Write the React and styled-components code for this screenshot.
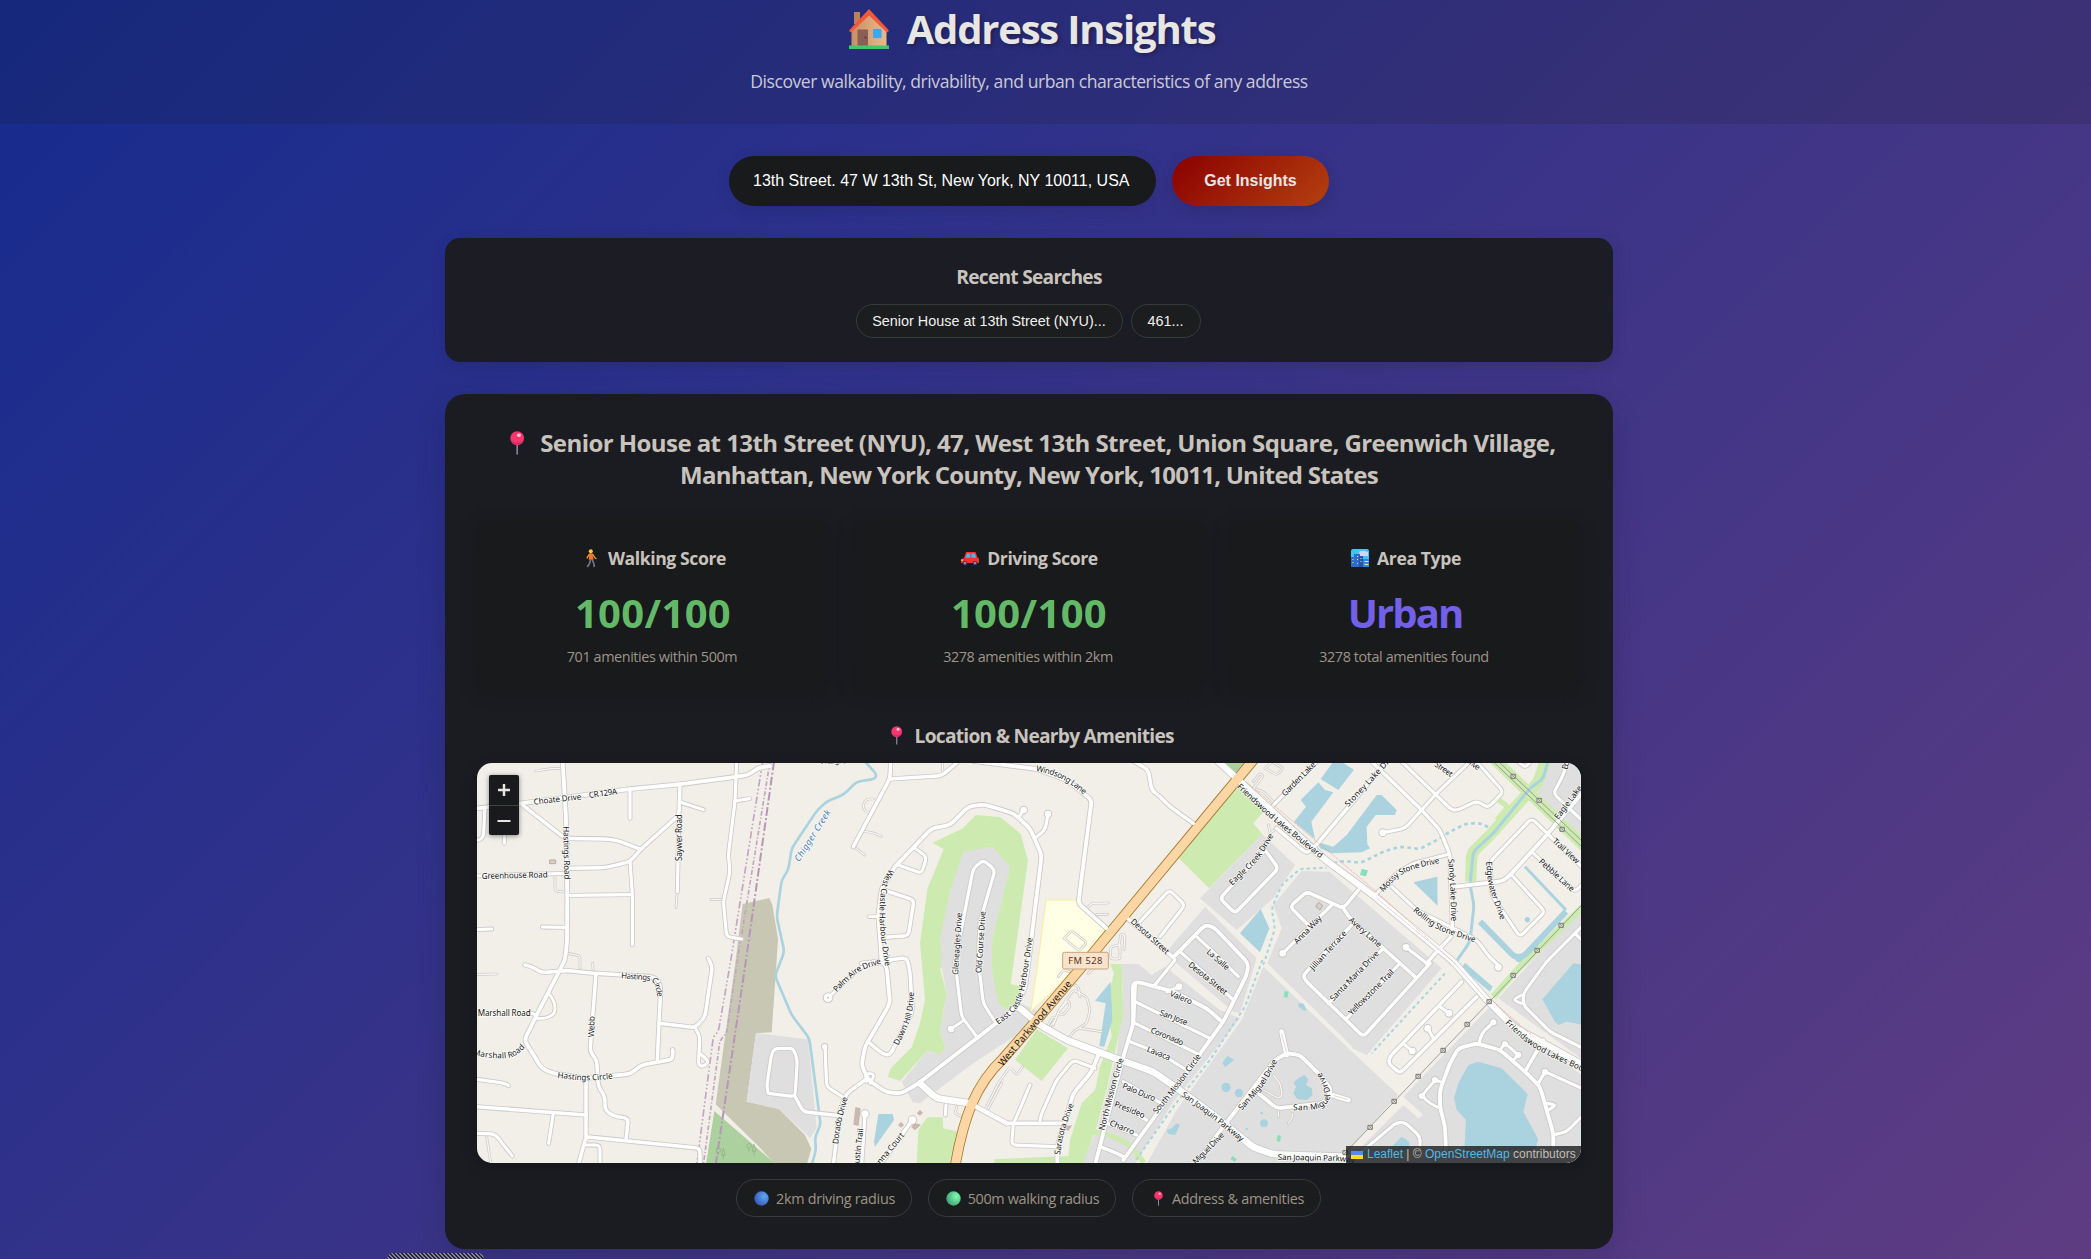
import React from "react";
import styled, { createGlobalStyle } from "styled-components";

const Global = createGlobalStyle`
  *, *::before, *::after { box-sizing: border-box; }
  html, body { margin: 0; padding: 0; }
  body {
    height: 1259px;
    overflow: hidden;
    font-family: "Open Sans", "Noto Sans", sans-serif;
    color: #c8c3bc;
    background: #2a2a7e;
  }
  h1, h2, h3, p { margin: 0; }
  svg { display: block; }
`;

const Page = styled.div`
  position: relative;
  height: 1259px;
  overflow: hidden;
  background: linear-gradient(135deg, #152b8e 0%, #5e3c82 100%);
`;

const Header = styled.header`
  height: 124px;
  padding-right: 33px;
  display: flex;
  flex-direction: column;
  align-items: center;
  background: rgba(24, 26, 27, 0.15);
`;

const Title = styled.h1`
  display: flex;
  align-items: center;
  gap: 17px;
  height: 60px;
  margin-top: -1px;
  padding-left: 5px;
  font-size: 40px;
  font-weight: 700;
  letter-spacing: -1.2px;
  line-height: 60px;
  color: #e8e6e3;
  text-shadow: 2px 2px 4px rgba(0, 0, 0, 0.3);
  white-space: nowrap;
`;

const Subtitle = styled.p`
  margin-top: 8px;
  font-size: 17.6px;
  line-height: 28px;
  letter-spacing: -0.46px;
  color: rgba(232, 230, 227, 0.85);
  white-space: nowrap;
`;

const Main = styled.main`
  width: 1168px;
  margin: 0 0 0 445px;
  padding-top: 32px;
  display: flex;
  flex-direction: column;
`;

const SearchForm = styled.div`
  display: flex;
  gap: 16px;
  width: 600px;
  height: 50px;
  margin: 0 auto 32px;
`;

const Input = styled.div`
  flex: 1;
  padding: 0 24px;
  border-radius: 25px;
  background: #181a1b;
  color: #fff;
  font: 16px/49px "Liberation Sans", sans-serif;
  white-space: nowrap;
  box-shadow: 0 4px 15px rgba(0, 0, 0, 0.1);
`;

const Submit = styled.button`
  width: 157px;
  padding: 0;
  border: 0;
  border-radius: 25px;
  background: linear-gradient(135deg, #8b0000, #b4400f);
  color: #e8e6e3;
  font: bold 16px "Liberation Sans", sans-serif;
  box-shadow: 0 4px 15px rgba(0, 0, 0, 0.15);
`;

const Recent = styled.section`
  height: 124px;
  margin-bottom: 32px;
  padding-top: 24px;
  border-radius: 15px;
  background: rgba(27, 28, 33, 0.97);
  box-shadow: 0 4px 15px rgba(0, 0, 0, 0.1);
`;

const SectionTitle = styled.h3`
  display: flex;
  align-items: center;
  justify-content: center;
  gap: ${(p) => p.$gap || 8}px;
  height: 28px;
  padding-top: ${(p) => (p.$large ? 1 : 0)}px;
  font-size: ${(p) => (p.$large ? 19.2 : 17.6)}px;
  font-weight: 700;
  line-height: 28px;
  letter-spacing: ${(p) => (p.$large ? -0.75 : -0.4)}px;
  color: #c8c3bc;
  white-space: nowrap;
`;

const Chips = styled.div`
  display: flex;
  justify-content: center;
  gap: ${(p) => p.$gap}px;
  margin-top: ${(p) => p.$top}px;
  padding-right: 2px;
`;

const Chip = styled.button`
  width: ${(p) => p.$w}px;
  height: 34px;
  padding: 0;
  border: 1px solid #363b3e;
  border-radius: 20px;
  background: #1b1d1e;
  color: #f2f0ee;
  font: 14.4px "Liberation Sans", sans-serif;
  white-space: nowrap;
`;

const Panel = styled.section`
  height: 855px;
  padding: 32px;
  border-radius: 20px;
  background: #1b1c21;
  box-shadow: 0 10px 30px rgba(0, 0, 0, 0.15);
`;

const Address = styled.h2`
  height: 70px;
  padding-top: 1px;
  font-size: 24px;
  font-weight: 700;
  line-height: 32px;
  letter-spacing: -0.56px;
  text-align: center;
  white-space: nowrap;
  color: #c8c3bc;
  svg { display: inline-block; vertical-align: -3px; margin: 0 15.4px 0 8px; }
`;

const AddressTail = styled.span`
  letter-spacing: -0.75px;
`;

const Cards = styled.div`
  display: grid;
  grid-template-columns: repeat(3, 1fr);
  gap: 24px;
  margin-top: 24px;
`;

const Card = styled.article`
  height: 170px;
  padding-top: 24px;
  border-radius: 15px;
  background: #191a1b;
  text-align: center;
  box-shadow: 0 4px 15px rgba(24, 26, 27, 0.9);
`;

const Score = styled.div`
  margin-top: 14px;
  font-size: 40px;
  font-weight: 700;
  line-height: 54px;
  letter-spacing: ${(p) => p.$track}px;
  color: ${(p) => p.$color};
`;

const Detail = styled.p`
  margin-top: 6px;
  padding-right: 2px;
  font-size: 14.4px;
  line-height: 22px;
  letter-spacing: -0.41px;
  color: #9d9488;
`;

const MapHeading = styled.div`
  margin-top: 31px;
  padding-left: 7px;
`;

const MapFrame = styled.div`
  position: relative;
  height: 400px;
  margin-top: 14px;
  overflow: hidden;
  border-radius: 15px;
  background: #f2efe9;
  box-shadow: 0 4px 15px rgba(0, 0, 0, 0.2);
`;

const ZoomControl = styled.div`
  position: absolute;
  top: 12px;
  left: 12px;
  width: 30px;
  height: 60px;
  border-radius: 2px;
  overflow: hidden;
  background: #181a1b;
  box-shadow: 0 1px 5px rgba(0, 0, 0, 0.45);
`;

const ZoomButton = styled.div`
  display: flex;
  align-items: center;
  justify-content: center;
  height: 30px;
  & + & { border-top: 1px solid #3e4446; }
`;

const Attribution = styled.div`
  position: absolute;
  right: 0;
  bottom: 0;
  display: flex;
  align-items: center;
  gap: 4px;
  width: 235px;
  height: 17px;
  padding-left: 5px;
  background: rgba(24, 26, 27, 0.8);
  color: #c3beb6;
  font: 12px/17px "Liberation Sans", sans-serif;
  white-space: nowrap;
  span { color: #50b9e8; }
`;

const Pill = styled.div`
  display: flex;
  align-items: center;
  justify-content: center;
  gap: 7px;
  width: ${(p) => p.$w}px;
  height: 38px;
  padding-left: ${(p) => p.$shift || 2}px;
  border: 1px solid #363b3e;
  border-radius: 20px;
  background: #1b1c1d;
  color: #9d9488;
  font-size: 14.4px;
  letter-spacing: ${(p) => p.$track || -0.3}px;
  white-space: nowrap;
`;

const Hatch = styled.div`
  position: absolute;
  left: 387px;
  top: 1253px;
  width: 97px;
  height: 6px;
  border-radius: 8px 8px 0 0;
  background: repeating-linear-gradient(45deg, #25233f 0 1.414px, #85839a 1.414px 2.828px);
`;

/* ---------- pictograms ---------- */

const House = () => (
  <svg width="42" height="42" viewBox="0 0 42 42">
    <defs>
      <linearGradient id="wall" x1="0" x2="1"><stop offset="0" stopColor="#c98f63" /><stop offset="1" stopColor="#e9b98c" /></linearGradient>
    </defs>
    <path d="M6 4h6v12H6z" fill="#b98258" />
    <path d="M3.500 20 21 4l17.500 16v18h-35z" fill="url(#wall)" />
    <path d="M21 1 40.500 22c.8 1.200-.8 3-2.200 2L21 7.500 3.700 24c-1.400 1-3-.8-2.200-2z" fill="#f4583a" />
    <rect x="9.500" y="21.500" width="10.500" height="16.500" rx="1" fill="#8b5f58" />
    <circle cx="17.500" cy="29.500" r="1" fill="#4a3135" />
    <rect x="25" y="21" width="8.500" height="9" rx="1" fill="#39a8f5" />
    <path d="M1 37.500h40v3.500H1z" fill="#3fc96c" />
  </svg>
);

const PinSvg = styled.svg`
  margin: 0 ${(p) => p.$side || 0}px;
`;

const Pin = ({ h = 24, side = 0 }) => (
  <PinSvg $side={side} width={h * 0.6} height={h} viewBox="0 0 14.400 24">
    <path d="M6.400 12h1.600v11.500H6.400z" fill="#8a8594" />
    <ellipse cx="7.200" cy="7.200" rx="6.800" ry="7" fill="#f5376f" />
    <path d="M1.200 9.500a6.400 6.400 0 0 0 12 0c-3 3-9 3-12 0z" fill="#cf2868" />
    <ellipse cx="9" cy="4.300" rx="2" ry="1.700" fill="#ffc2d2" />
  </PinSvg>
);

const Walker = () => (
  <svg width="20" height="19" viewBox="-5.500 0 20 19">
    <circle cx="5.300" cy="2.200" r="2" fill="#ffc83d" />
    <path d="M3.800 4.300h3l1.200 6.400H3.300z" fill="#f9722f" />
    <path d="M4 5 1.300 9.300M7 5l2.500 4 1.500.8" stroke="#ffa62b" strokeWidth="1.300" fill="none" />
    <path d="M5 10.500 4.300 14l-2.500 4M6.800 10.500l1.400 3.700.7 3.800" stroke="#77728a" strokeWidth="1.700" fill="none" />
  </svg>
);

const Car = () => (
  <svg width="19" height="15" viewBox="-0.500 -1 19 15">
    <path d="M5.500 0h9.500l2 5.500 1.500 1v4.500H.5V7.500L3.500 6z" fill="#f8312f" />
    <path d="M6.500 1.500h3.300v4.200H5zM11 1.500h3.300l1.300 4.200H11z" fill="#4eb5f5" />
    <circle cx="4.500" cy="11" r="2.300" fill="#4b3f6b" /><circle cx="14.500" cy="11" r="2.300" fill="#4b3f6b" />
    <circle cx="4.500" cy="11" r=".9" fill="#b6a9d4" /><circle cx="14.500" cy="11" r=".9" fill="#b6a9d4" />
    <path d="M.5 7.500h2v1.300h-2z" fill="#ffd43b" />
  </svg>
);

const CitySvg = styled.svg`
  margin-left: 2px;
`;

const City = () => (
  <CitySvg width="18" height="18" viewBox="0 0 18 18">
    <rect width="18" height="18" rx="2" fill="#3fc4f5" />
    <path d="M8 3c2-2 3 0 4-1 2-1 3 1 5 1v4H9z" fill="#d4d3fa" />
    <path d="M0 8h3V5h6v13H0z" fill="#2a6fd0" /><path d="M8 7h4v11H8z" fill="#2257ad" />
    <path d="M12 10h6v8h-6z" fill="#3183dc" />
    <path d="M1.500 10h1v1h-1zM1.500 13h1v1h-1zM6 7h1v1H6zM6 10h1v1H6zM9.500 9h1v1h-1zM9.500 12h1v1h-1zM6 14h1v1H6z" fill="#ffe27a" />
    <path d="M13.500 12h4v1h-4zM13.500 15h4v1h-4z" fill="#ffe27a" />
  </CitySvg>
);

const Ball = ({ id, a, b }) => (
  <svg width="15" height="15" viewBox="0 0 15 15">
    <defs><radialGradient id={id} cx=".7" cy=".35" r=".75"><stop offset="0" stopColor={a} /><stop offset="1" stopColor={b} /></radialGradient></defs>
    <circle cx="7.500" cy="7.500" r="7.200" fill={`url(#${id})`} />
  </svg>
);

const Flag = () => (
  <svg width="12" height="8" viewBox="0 0 12 8"><path fill="#4c8fe6" d="M0 0h12v4H0z" /><path fill="#ffd91a" d="M0 4h12v4H0z" /></svg>
);

/* ---------- street map ----------
   The sheet is split into six tiles; every entry starts with its tile. */

const TILE = { a: [0, 0], b: [0, 615], c: [1110, 0], d: [1110, 615], e: [2220, 0], f: [2220, 615] };
const at = (t) => `translate(${TILE[t][0]} ${TILE[t][1]})`;

const GRASS = "#cdebb0", WATER = "#aad3df", HOMES = "#e0dfdf", WOOD = "#add19e", LAND = "#f2efe9";

const AREAS = [
  ["a", "#c7c7b4", "818,447 898,429 907,450 924,552 920,615 905,832 858,834 830,1040 927,1062 1005,1140 1024,1182 1010,1230 917,1230 870,1178 737,1048 795,630"],
  ["b", WOOD, "733,453 917,612 708,612"],
  ["b", HOMES, "858,219 1014,238 1040,505 1020,535 1003,517 927,447 830,425"],
  ["c", GRASS, "408,180 480,186 542,236 564,316 520,630 512,687 553,695 530,750 500,765 475,745 440,640 300,640 320,715 300,830 317,877 300,898 262,887 180,978 143,965 152,940 215,877 240,805 255,735 240,565 262,402 311,283 278,263 368,220"],
  ["c", HOMES, "370,290 457,275 511,336 457,550 455,640 475,745 500,765 540,745 600,770 560,820 400,925 240,1045 218,1042 185,980 262,887 300,898 317,877 300,830 320,715 304,630 300,550 330,410"],
  ["c", "#ffffe5", "619,435 708,435 718,455 800,520 700,650 572,770 593,630", "#f8ee9c"],
  ["d", GRASS, "590,208 684,265 605,363 525,300"],
  ["d", GRASS, "262,472 308,472 310,505 355,515 335,612 230,612 235,510"],
  ["d", HOMES, "845,12 895,12 935,45 975,20 1140,150 1200,175 1000,425 885,612 725,612 770,510 800,400 830,280 850,120"],
  ["d", GRASS, "810,12 845,12 850,160 822,290 800,390 770,500 728,612 463,612 463,598 685,588 690,540 725,430 765,390 780,320 815,230 800,130 822,40"],
  ["e", GRASS, "-98,305 -3,400 157,238 130,205 165,165 85,95"],
  ["e", WOOD, "45,24 105,24 75,55"],
  ["e", HOMES, "-30,430 157,238 255,330 190,430 80,525"],
  ["e", HOMES, "-15,455 140,610 90,775 70,770 -135,595"],
  ["e", HOMES, "275,348 358,350 695,640 470,900 420,877 172,625 215,520 190,450"],
  ["f", HOMES, "160,20 415,265 565,405 400,585 400,612 -190,612 -100,450 95,180"],
  ["f", HOMES, "850,130 580,410 640,465 625,475 580,435 425,590 425,612 1120,612 1120,350"],
  ["f", HOMES, "865,115 960,10 1120,-155 1120,300"],
  ["e", HOMES, "1020,20 1120,20 1120,250 1080,215 980,110"],
  ["d", WATER, "812,65 817,180 793,260 778,258 797,130 765,122"],
  ["d", WATER, "115,462 158,462 162,480 105,560 102,545"],
  ["e", WATER, "370,20 400,24 432,44 385,105 332,72"],
  ["e", WATER, "325,82 345,105 370,112 304,200 315,252 252,200 288,155 272,135"],
  ["e", WATER, "500,120 515,120 560,165 555,180 497,180 470,215 472,268 480,280 455,292 365,295 330,280 325,262 370,275 410,240"],
  ["e", WATER, "610,382 682,365 683,452"],
  ["e", WATER, "152,462 178,520 150,592 90,535"],
  ["f", WATER, "1090,10 1120,15 1120,195 1070,185 1045,195 1035,185 997,118"],
  ["f", WATER, "765,8 848,80 840,95 755,25"],
  ["f", WATER, "805,305 875,325 953,402 940,455 985,538 975,570 763,570 768,480 740,450 732,415 745,370 775,315"],
  ["f", WATER, "575,530 598,545 598,570 535,570"],
  ["f", WATER, "52,287 72,300 45,322 37,308"],
  ["f", WATER, "265,355 285,345 295,360 288,375 305,385 308,405 290,420 262,417 250,400 258,380 250,368"],
  ["d", WATER, "1010,490 1020,495 1005,525 985,522 980,510 995,505"],
  ["f", WATER, "265,130 280,130 290,150 283,152 265,140"],
  ["e", "#88dfbc", "455,342 474,346 468,364 450,360"],
  ["f", "#88dfbc", "224,93 236,95 232,113 221,111"],
  ["f", "#88dfbc", "203,525 213,528 210,546 200,543"],
  ["f", "#88dfbc", "67,588 80,597 75,605 61,597"],
  ["e", "#d9d0c9", "327,443 338,452 330,465 318,455", "#b8a89c"],
  ["a", "#d9d0c9", "240,315 257,315 257,326 240,326", "#b8a89c"],
  ["d", "#c9b8ad", "46,441 62,445 56,498 40,494"],
  ["d", "#c9b8ad", "240,450 249,458 240,467 230,460"],
  ["d", "#c9b8ad", "183,486 192,495 183,503 174,495"],
  ["d", "#c9b8ad", "222,488 243,494 225,511 214,502"],
  ["d", "#c9b8ad", "680,497 697,496 685,513 674,507"],
];

const DOTS = [["e", 952, 494, 8], ["f", 48, 382, 14], ["f", 87, 399, 13], ["f", 162, 490, 12], ["f", 110, 507, 4], ["f", 155, 459, 4], ["f", 928, -5, 12]];

// tile, colour, width, dash, points
const BANKS = [
  ["e", GRASS, 34, "", "850,10 1130,280"],
  ["e", GRASS, 34, "", "1005,20 985,80 845,235 785,295 782,380"],
  ["e", GRASS, 16, "", "860,195 895,155 865,135"],
  ["e", GRASS, 20, "", "1120,455 930,635 850,725"],
  ["d", GRASS, 16, "", "755,515 810,525 870,555 912,608"],
];

const LINES = [
  ["e", WATER, 9, "", "1013,20 1000,70 960,100 850,235 790,290 780,390 792,450 780,560 735,625"],
  ["e", WATER, 18, "", "810,500 915,607 940,605 1068,470"],
  ["e", WATER, 9, "", "945,335 1068,465"],
  ["c", WATER, 8, "", "75,20 110,58 105,72 50,80 12,118 -40,140 -68,165 -145,280 -155,345 -175,375 -190,485 -167,590 -195,663 -145,780 -92,850 -58,1110 -75,1145 -72,1185 -85,1230"],
  ["e", WATER, 6, "10 9", "160,630 195,520 185,460 215,390 270,342 350,338"],
  ["e", WATER, 8, "11 10", "350,330 395,318 455,323 520,290 570,275 630,282 680,255 720,230 770,205 815,205 840,220"],
  ["f", WATER, 6, "10 9", "157,0 105,140 0,300 -110,440 -225,605"],
  ["f", WATER, 6, "10 9", "705,40 485,280"],
  ["f", LAND, 10, "", "165,10 425,265"],
  ["a", "#c3a4c3", 5, "22 7 5 7 5 7", "878,20 780,630 745,830 730,845 680,1230"],
  ["a", "#c3a4c3", 5, "14 6 4 6", "900,20 800,630 770,835 750,855 700,1230"],
  ["a", "#b796b8", 6, "26 7 6 7", "912,20 828,615 737,1230"],
];

const SERVICE = [
  ["a", "197,48 240,41 275,41"], ["a", "255,360 255,408 290,412"], ["a", "622,410 618,458"], ["a", "723,434 760,434"],
  ["a", "295,595 330,603 330,640"], ["b", "21,43 80,42"], ["b", "368,10 370,40"], ["b", "50,530 62,608"],
  ["c", "308,24 308,60"], ["c", "98,175 75,170 68,150 80,132 100,132"], ["c", "70,228 105,235 124,244"], ["c", "45,278 74,300"],
  ["c", "740,460 755,445 805,444"], ["c", "770,478 803,478"], ["c", "672,550 695,527 740,562 718,588 672,550"], ["c", "840,570 812,575 812,612 840,612 840,570"],
  ["c", "837,580 842,537 855,540 852,585"],
  ["d", "745,40 790,0"], ["d", "655,50 670,30 690,35"], ["d", "640,195 655,155 700,90 740,110 750,150 740,190 700,215 687,235"], ["d", "720,205 785,215"],
  ["d", "660,150 685,120 690,140 670,165 655,160"], ["d", "625,195 640,170 650,175 630,200"], ["d", "705,75 715,80 720,110"], ["d", "435,450 475,370 510,320 530,345 548,320"],
  ["d", "442,450 485,370"], ["d", "350,440 345,460 370,472 385,445"],
  ["e", "130,80 150,55 160,62 130,100"], ["e", "165,40 185,20 220,40 200,60 165,40"], ["e", "130,100 160,110 190,140"], ["e", "200,220 180,235 175,210"],
  ["f", "160,390 205,415 217,405 210,370 190,345"], ["f", "205,445 205,470"], ["f", "247,460 247,475 235,490"],
];

// tile, fill width, points
const ROADS = [
  ["a", 11, "278,20 288,190 292,430 291,560 285,615 200,780 163,855 215,940 250,955 345,970 480,957 515,930 608,913 608,885"],
  ["a", 11, "21,160 155,145 480,102 630,88 800,65 835,60 865,38 900,33"],
  ["a", 9, "480,102 480,190"], ["a", 10, "630,88 627,180 512,283 480,320 405,338 293,340"],
  ["a", 9, "15,363 290,355"], ["a", 10, "155,148 285,250 410,252 440,256 512,283"], ["a", 9, "480,320 487,415 487,570"],
  ["a", 9, "298,421 485,419"], ["a", 9, "632,142 700,164"], ["a", 9, "627,180 622,410"],
  ["a", 9, "800,20 795,140 775,300 780,350 760,440 770,545 815,552"], ["a", 9, "795,138 838,131"],
  ["a", 9, "45,160 40,250 15,258"], ["a", 9, "103,220 103,265"], ["a", 9, "217,516 290,517"], ["a", 9, "15,524 65,522"],
  ["b", 10, "165,15 185,20 215,38 290,32 375,40 550,50 568,65 572,90 567,190 562,300"],
  ["b", 10, "567,190 675,203 705,170 727,20 715,-5"], ["b", 9, "675,203 690,230 685,315 700,320 717,305 690,280"],
  ["b", 10, "378,40 360,275 380,300 385,380 405,410 405,450 430,468 475,475 468,540"],
  ["b", 9, "180,158 200,165"], ["b", 8, "240,105 255,130 255,160 230,175 200,175"],
  ["b", 10, "348,355 348,530"], ["b", 10, "15,440 348,465"], ["b", 9, "250,460 236,550"],
  ["b", 10, "690,615 690,565 348,530 325,615"], ["b", 9, "345,555 390,555 390,615"],
  ["b", 9, "15,357 105,370 115,377"], ["b", 9, "15,520 75,522 127,588"],
  ["b", 9, "895,400 890,380 905,280 915,265 970,265 982,300 975,410 895,400"], ["b", 10, "975,410 1000,455 1110,467"],
  ["b", 9, "1065,260 1070,380 1120,412"],
  ["d", 10, "75,360 20,400 0,450 -20,615"], ["d", 8, "-36,113 0,80 60,22 155,0"],
  ["c", 10, "152,20 150,70 40,275"], ["c", 10, "150,72 305,62 350,24"],
  ["c", 11, "400,18 590,42 680,75 755,135 715,445 800,520"], ["c", 10, "880,18 925,45 935,105 960,125 990,155 1060,205"],
  ["c", 11, "165,335 275,220 330,210 385,155 430,148 520,175 570,220 605,300 575,545 555,700 520,765 235,985 185,1015 140,1012 85,975 65,930 75,875 150,745 140,635 125,620 115,480 125,400 165,335"],
  ["c", 9, "538,185 550,165"], ["c", 9, "590,245 615,225 624,180"],
  ["c", 9, "225,280 260,305 245,355 175,330"], ["c", 10, "130,405 222,435 205,542 135,547"], ["c", 8, "88,485 115,485"],
  ["c", 10, "65,625 200,608 210,650 217,770 150,900 130,898 90,865"],
  ["c", 9, "345,620 400,340 430,315 465,345 420,500 415,620 430,745 465,800"], ["c", 9, "345,620 365,785 410,845"], ["d", 8, "333,207 370,182"],
  ["c", 10, "860,488 1000,607"], ["c", 9, "900,500 988,405 1035,450 960,545"],
  ["c", 11, "1000,607 1095,510 1120,515 1225,625 1220,660 1150,800 850,1215"], ["c", 9, "1070,545 1140,610 1195,665"], ["c", 9, "1020,590 1100,660 1180,735"],
  ["d", 9, "940,80 1005,0"], ["d", 9, "980,95 1017,80"],
  ["d", 11, "880,187 878,75 890,65 1000,95 1100,145 1140,180"], ["d", 11, "885,75 880,190 850,290 765,615"],
  ["d", 9, "885,125 1110,235"], ["d", 9, "880,187 1080,285"], ["d", 9, "870,245 960,280 1040,330"],
  ["d", 9, "850,365 965,430"], ["d", 9, "830,430 920,480"], ["d", 9, "800,490 890,525"], ["d", 10, "780,560 820,575 850,590"],
  ["d", 11, "500,490 665,490"], ["d", 9, "520,490 515,555 645,560"], ["d", 11, "652,615 652,560 700,400 755,335 775,285"],
  ["d", 9, "600,480 605,460 650,360 700,300 765,325"], ["d", 9, "570,375 530,470 520,490"], ["d", 9, "318,435 316,465"],
  ["d", 9, "75,462 65,615"], ["d", 10, "217,480 120,615"], ["d", 8, "80,365 75,340 105,342 90,370"],
  ["e", 10, "200,220 290,295 310,280 530,20"], ["e", 9, "190,150 320,20"],
  ["e", 10, "485,20 635,165 690,225 720,300 728,540 680,590 650,625"], ["e", 9, "520,233 585,220 680,115 780,20"],
  ["e", 9, "575,20 725,165 745,165 800,138 835,158 880,110 800,20"], ["e", 10, "165,285 205,340 75,475 30,430 165,285"],
  ["e", 9, "500,415 560,355 610,325 715,298"], ["e", 9, "545,395 620,465 800,555 840,608 870,635"],
  ["e", 11, "735,395 880,378 905,355 1010,240 1120,110"], ["e", 9, "1120,340 965,190 840,320 845,420 930,545 1005,470 905,360"],
  ["e", 9, "965,290 1095,410 1120,385"], ["e", 9, "1070,20 1060,60 1030,115 1120,200"], ["e", 9, "925,20 945,38 960,22"],
  ["e", 10, "445,405 400,460 290,410 240,455 300,515"], ["e", 9, "365,450 218,595"],
  ["e", 10, "400,460 420,490 520,580 615,665"], ["e", 10, "430,505 280,660 285,675 460,845 660,625"],
  ["e", 9, "520,580 355,745"], ["f", 9, "565,15 410,175"], ["e", 9, "588,577 650,625"], ["e", 9, "1120,510 1010,620 940,715 940,750 1020,830 1120,880"], ["e", 9, "1095,535 1120,560"],
  ["f", 8, "935,105 908,120 935,130"], ["f", 10, "755,65 540,290 535,310 570,340 800,110"],
  ["f", 9, "690,140 717,160"], ["f", 9, "653,205 670,235"], ["f", 9, "585,255 607,273"],
  ["f", 11, "708,570 705,500 690,440 690,390 720,310 745,265 800,250 870,270 945,335 990,380 1030,520 1030,570"],
  ["f", 9, "807,250 815,220 850,187"], ["f", 8, "690,445 660,430 635,408 675,360 690,365"], ["f", 8, "870,270 885,250 925,285 910,300"],
  ["f", 10, "945,335 1000,240"], ["f", 9, "985,370 1005,335 1120,387"], ["f", 9, "1010,430 1040,435 1015,450"], ["f", 9, "1030,525 1070,515 1120,465"],
  ["f", 14, "215,215 230,285"], ["f", 11, "230,280 195,300 40,500 -20,580"], ["f", 11, "230,280 270,285 330,345 365,390 340,430 200,445 145,400"], ["f", 14, "365,405 415,420"],
  ["f", 9, "450,580 560,487 585,487 630,530 630,570"],
  ["d", 19, "540,145 600,195 680,240 840,300 940,335 1040,405 1140,480 1240,562 1300,583 1520,590"],
  ["d", 19, "240,370 290,415 390,430"], ["d", 13, "390,430 500,490"],
  ["e", 18, "20,15 340,310 495,425 730,620 838,742 910,815 1120,930"],
];

const CULS = [["b", 1074, 113, 13], ["b", 1064, 260, 8], ["c", 551, 165, 10], ["c", 624, 177, 10], ["d", 333, 207, 10], ["d", 75, 462, 11], ["d", 217, 480, 11], ["d", 1017, 80, 10],
  ["e", 518, 233, 10], ["e", 218, 595, 10], ["e", 588, 577, 10], ["f", 865, 22, 10], ["f", 717, 160, 10], ["f", 653, 205, 10], ["f", 607, 273, 10], ["f", 850, 187, 9],
  ["f", 635, 408, 9], ["f", 675, 360, 9], ["f", 885, 253, 9], ["f", 925, 285, 9], ["f", 1005, 335, 9]];

const PYLONS = [["e", 910, 64], ["e", 988, 136], ["e", 1057, 223], ["e", 1054, 511], ["e", 982, 586], ["f", 910, 46], ["f", 838, 125], ["f", 772, 193], ["f", 700, 271], ["f", 625, 349], ["f", 553, 424], ["f", 481, 502], ["f", 406, 578]];

const LABELS = [
  ["a", "Choate Drive", "192,149 336,133"], ["a", "CR 129A", "358,129 443,117"], ["a", "Hastings Road", "280,214 283,375"],
  ["a", "Saywer Road", "635,318 635,176"], ["a", "Greenhouse Road", "35,372 235,367"],
  ["b", "Hastings Circle", "453,55 540,61 556,72 562,110"], ["b", "Marshall Road", "23,169 184,169"], ["b", "Marshall Road", "8,286 60,294 105,296 140,288 165,262"],
  ["b", "Webb", "372,232 374,168"], ["b", "Hastings Circle", "262,353 345,363 430,356"], ["b", "Dorado Drive", "1105,553 1110,500 1133,412"],
  ["d", "Palm Aire Drive", "-10,97 20,66 60,30 125,10"],
  ["c", "Windsong Lane", "587,48 640,60 690,85 732,120"], ["c", "West Castle Harbour Drive", "148,342 124,385 117,480 124,560 136,636"],
  ["c", "Gleneagles Drive", "354,660 366,472"], ["c", "Old Course Drive", "424,655 437,467"],
  ["d", "East Castle Harbour Drive", "475,194 525,157 550,110 562,40 578,-68"], ["d", "Dawn Hill Drive", "175,257 208,190 219,150 222,95"],
  ["c", "Desota Street", "870,502 980,600"], ["d", "Austin Trail", "56,625 70,505"], ["d", "Vienna Court", "100,640 195,525"], ["d", "Sarasota Drive", "660,585 670,520 702,432"],
  ["d", "Valero", "988,107 1053,134"], ["d", "San Jose", "957,164 1040,197"], ["d", "Coronado", "930,217 1027,257"], ["d", "Lavaca", "919,274 988,302"],
  ["d", "Palo Duro", "845,384 943,425"], ["d", "Presideo", "821,439 912,475"], ["d", "Charro", "807,495 880,525"],
  ["d", "North Mission Circle", "793,512 825,385 852,295"], ["d", "South Mission Circle", "950,463 1012,388 1085,288"],
  ["f", "San Joaquin Parkway", "-87,407 0,470 95,547"], ["f", "San Miguel Drive", "-70,643 45,525"],
  ["e", "Friendswood Lakes Boulevard", "80,97 180,190 333,312"], ["e", "Garden Lake", "225,125 320,30"], ["e", "Stoney Lake Drive", "415,157 565,-5"],
  ["e", "Street", "672,32 722,67"], ["e", "Drive", "765,18 803,47"], ["e", "Eagle Creek Drive", "67,392 145,318 192,240"], ["e", "Mossy Stone Drive", "520,412 565,362 615,340 690,324"],
  ["e", "Sandy Lake Drive", "715,312 722,420 722,500"], ["e", "Edgewater Drive", "828,320 834,390 872,497"], ["e", "Trail View", "1026,260 1100,328"], ["e", "Pebble Lane", "985,322 1085,412"],
  ["e", "Rolling Stone Drive", "608,468 680,525 795,563"], ["e", "Anna Way", "262,569 337,490"], ["e", "Avery Lane", "415,497 507,579"], ["e", "Jillian Terrace", "310,647 412,535"],
  ["f", "Santa Maria Drive", "370,125 510,-20"], ["f", "Yellowstone Trail", "425,167 555,37"], ["e", "Eagle Lake", "1045,195 1118,98"], ["e", "Bo", "1072,45 1078,20"],
  ["f", "Desota Street", "-67,17 45,107"], ["f", "La Salle", "-12,-22 50,32"], ["f", "San Miguel Drive", "95,452 165,374 203,302"],
  ["f", "San Miguel Drive", "250,451 320,450 355,430 365,395 335,340"], ["f", "Friendswood Lakes Boulevard", "885,190 950,250 1010,285 1185,365"],
  ["f", "San Joaquin Parkway", "203,600 395,603 435,610"], ["c", "Windsong Lane", "-60,26 20,24"],
];

const parse = (s) => s.split(" ").map((p) => p.split(",").map(Number));
const lengthOf = (pts) => pts.slice(1).reduce((n, p, i) => n + Math.hypot(p[0] - pts[i][0], p[1] - pts[i][1]), 0);

// rounds the corners of a polyline
const smooth = (s, r = 14) => {
  const p = parse(s);
  let d = `M${p[0]}`;
  for (let i = 1; i < p.length - 1; i++) {
    const cut = (q) => {
      const l = Math.hypot(q[0] - p[i][0], q[1] - p[i][1]) || 1;
      const k = Math.min(r, l / 2) / l;
      return [p[i][0] + (q[0] - p[i][0]) * k, p[i][1] + (q[1] - p[i][1]) * k];
    };
    d += `L${cut(p[i - 1])}Q${p[i]} ${cut(p[i + 1])}`;
  }
  return d + `L${p[p.length - 1]}`;
};

const MapText = styled.text`
  font-family: "Noto Sans", sans-serif;
  font-size: ${(p) => p.$size || 24.5}px;
  font-style: ${(p) => (p.$italic ? "italic" : "normal")};
  fill: ${(p) => p.$color || "#161616"};
  stroke: rgba(255, 255, 255, 0.7);
  stroke-width: ${(p) => (p.$bare ? 0 : 5)}px;
  stroke-linejoin: round;
  paint-order: stroke;
`;

const Label = ({ id, tile, text, pts, ...rest }) => {
  const p = parse(pts);
  const len = lengthOf(p);
  const a = p[p.length - 2], b = p[p.length - 1];
  const seg = Math.hypot(b[0] - a[0], b[1] - a[1]);
  const end = [b[0] + ((b[0] - a[0]) / seg) * 30, b[1] + ((b[1] - a[1]) / seg) * 30];
  const d = smooth([...p.slice(0, -1), end].map((q) => q.join(",")).join(" "), 40);
  return (
    <g transform={at(tile)}>
      <path id={id} d={d} fill="none" />
      <MapText textLength={len * 0.99} {...rest}><textPath href={`#${id}`}>{text}</textPath></MapText>
    </g>
  );
};

const HIGHWAY = "M345,1235 C370,1090 405,990 490,910 L590,795 L730,630 L1140,135 L1240,15";

const Line = ({ line: [t, c, w, dash, pts] }) => (
  <path transform={at(t)} d={smooth(pts)} fill="none" stroke={c} strokeWidth={w} strokeDasharray={dash || undefined} strokeLinecap="butt" />
);

const StreetMap = () => (
  <svg width="1104" height="400" viewBox="21 24 3312 1200">
    <g strokeLinejoin="round" strokeLinecap="round">
      {AREAS.map(([t, c, pts, s], i) => <polygon key={i} transform={at(t)} points={pts} fill={c} stroke={s || "none"} strokeWidth="3" />)}
      {DOTS.map(([t, x, y, r], i) => <circle key={i} transform={at(t)} cx={x} cy={y} r={r} fill={WATER} />)}
      {BANKS.map((l, i) => <Line key={i} line={l} />)}
      {LINES.map((l, i) => <Line key={i} line={l} />)}
      <g fill="none" stroke="#8aab7e" strokeWidth="2">
        {[[745, 1182], [837, 1170]].map(([x, y], i) => <path key={i} d={`M${x} ${y + 18}v-8a7 7 0 1 1 1 0M${x + 15} ${y + 30}v-12h-6l6-20 6 20h-6`} />)}
      </g>
      <g fill="none">
        {SERVICE.map(([t, pts], i) => <path key={i} transform={at(t)} d={smooth(pts, 8)} stroke="#c9c7c4" strokeWidth="8" />)}
        {SERVICE.map(([t, pts], i) => <path key={i} transform={at(t)} d={smooth(pts, 8)} stroke="#f8f7f4" strokeWidth="4" />)}
        {ROADS.map(([t, w, pts], i) => <path key={i} transform={at(t)} d={smooth(pts)} stroke="#cbc9c6" strokeWidth={w + 5.5} />)}
        {CULS.map(([t, x, y, r], i) => <circle key={i} transform={at(t)} cx={x} cy={y} r={r + 3} fill="#cbc9c6" />)}
        <path transform={at("c")} d={HIGHWAY} stroke="#a67a2c" strokeWidth="32" />
        {ROADS.map(([t, w, pts], i) => <path key={i} transform={at(t)} d={smooth(pts)} stroke="#fff" strokeWidth={w + 0.5} />)}
        {CULS.map(([t, x, y, r], i) => <circle key={i} transform={at(t)} cx={x} cy={y} r={r} fill="#fff" />)}
        <path transform={at("c")} d={HIGHWAY} stroke="#fcd6a4" strokeWidth="27" />
        <circle transform={at("b")} cx="1074" cy="113" r="3" fill="#cbc9c6" />
        {["215,222 229,275", "372,407 412,418"].map((p) => <path key={p} transform={at("f")} d={smooth(p)} stroke="#cbc9c6" strokeWidth="2" />)}
        <path transform={at("e")} d="M500 430 730 620 838 742" stroke="#cbc9c6" strokeWidth="2" />
        <path transform={at("e")} d="M110 82 500 411 735 626M850 740 970 845" stroke="#f6877c" strokeOpacity="0.75" strokeWidth="2" strokeDasharray="6 5" />
        <g transform={at("e")} stroke="#8d8d8a" strokeWidth="2.500">
          <path d="M850 20 1120 280M860 14 1120 262M1120 445 406 1193" />
        </g>
      </g>
      {PYLONS.map(([t, x, y], i) => (
        <g key={i} transform={at(t)}><rect x={x - 6} y={y - 6} width="12" height="12" fill="#f4f2ee" stroke="#77756f" strokeWidth="3" /><path d={`M${x - 4} ${y - 4}l8 8m0-8l-8 8`} stroke="#77756f" strokeWidth="2" /></g>
      ))}
    </g>
    {LABELS.map(([t, text, pts], i) => <Label key={i} id={`st${i}`} tile={t} text={text} pts={pts} />)}
    <Label id="creek" tile="a" text="Chigger Creek" pts="988,322 1084,170" $size={27} $italic $color="#4a80b8" />
    <Label id="avenue" tile="d" text="West Parkwood Avenue" pts="488,320 590,198 698,70" $size={29} $bare />
    <g transform={at("c")}>
      <rect x="668" y="592" width="137" height="50" rx="5" fill="#f8e3cf" stroke="#c9a37c" strokeWidth="3" />
      <MapText x="685" y="628" textLength="102" $size={28} $bare $color="#5b3412">FM 528</MapText>
    </g>
  </svg>
);

const CARDS = [
  { icon: <Walker />, title: "Walking Score", value: "100/100", detail: "701 amenities within 500m", color: "#63b967", track: 0.35 },
  { icon: <Car />, title: "Driving Score", value: "100/100", detail: "3278 amenities within 2km", color: "#63b967", track: 0.35 },
  { icon: <City />, title: "Area Type", value: "Urban", detail: "3278 total amenities found", color: "#7360e8", track: -1.9 },
];

export default function App() {
  return (
    <Page>
      <Global />
      <Header>
        <Title><House />Address Insights</Title>
        <Subtitle>Discover walkability, drivability, and urban characteristics of any address</Subtitle>
      </Header>
      <Main>
        <SearchForm>
          <Input>13th Street. 47 W 13th St, New York, NY 10011, USA</Input>
          <Submit>Get Insights</Submit>
        </SearchForm>
        <Recent>
          <SectionTitle $large>Recent Searches</SectionTitle>
          <Chips $gap={8} $top={14}>
            <Chip $w={267}>Senior House at 13th Street (NYU)...</Chip>
            <Chip $w={70}>461...</Chip>
          </Chips>
        </Recent>
        <Panel>
          <Address>
            <Pin h={24} />Senior House at 13th Street (NYU), 47, West 13th Street, Union Square, Greenwich Village,<br />
            <AddressTail>Manhattan, New York County, New York, 10011, United States</AddressTail>
          </Address>
          <Cards>
            {CARDS.map((c) => (
              <Card key={c.title}>
                <SectionTitle>{c.icon}{c.title}</SectionTitle>
                <Score $color={c.color} $track={c.track}>{c.value}</Score>
                <Detail>{c.detail}</Detail>
              </Card>
            ))}
          </Cards>
          <MapHeading><SectionTitle $large $gap={12}><Pin h={19} />Location &amp; Nearby Amenities</SectionTitle></MapHeading>
          <MapFrame>
            <StreetMap />
            <ZoomControl>
              <ZoomButton><svg width="14" height="14"><path d="M7 1v12M1 7h12" stroke="#e8e6e3" strokeWidth="2.500" /></svg></ZoomButton>
              <ZoomButton><svg width="14" height="14"><path d="M.5 7h13" stroke="#e8e6e3" strokeWidth="2" /></svg></ZoomButton>
            </ZoomControl>
            <Attribution><Flag /><div><span>Leaflet</span> | © <span>OpenStreetMap</span> contributors</div></Attribution>
          </MapFrame>
          <Chips $gap={16} $top={16}>
            <Pill $w={176}><Ball id="blue" a="#5fa8f0" b="#3557b8" />2km driving radius</Pill>
            <Pill $w={188} $track={-0.34}><Ball id="green" a="#7dffae" b="#3f9d78" />500m walking radius</Pill>
            <Pill $w={189} $shift={4}><Pin h={15} side={2} />Address &amp; amenities</Pill>
          </Chips>
        </Panel>
      </Main>
      <Hatch />
    </Page>
  );
}
